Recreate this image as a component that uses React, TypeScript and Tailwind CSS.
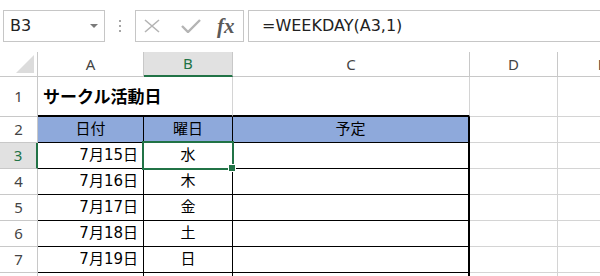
import React from "react";

const GREEN = "#217346";

const days = [
  { date: "7月15日", wd: "水" },
  { date: "7月16日", wd: "木" },
  { date: "7月17日", wd: "金" },
  { date: "7月18日", wd: "土" },
  { date: "7月19日", wd: "日" },
  { date: "", wd: "" },
];

const cellFont = { fontFamily: '"DejaVu Sans", "Noto Sans CJK JP", sans-serif' };
const headFont = { fontFamily: '"Noto Sans", "DejaVu Sans", sans-serif' };

function FormulaBar() {
  return (
    <div className="flex h-[52px] items-start pt-[10px]" style={{ fontFamily: '"DejaVu Sans", sans-serif' }}>
      <div className="ml-[3px] flex h-[32px] w-[102px] items-center justify-between border border-[#c6c6c6] pl-[6px] pr-[6px] text-[16px] text-[#222]">
        <span>B3</span>
        <span className="h-0 w-0 border-x-[4px] border-t-[4px] border-x-transparent border-t-[#7a7a7a]" />
      </div>
      <div className="flex h-[32px] w-[30px] flex-col items-center justify-center gap-[3px]">
        <span className="h-[2px] w-[2px] bg-[#a6a6a6]" />
        <span className="h-[2px] w-[2px] bg-[#a6a6a6]" />
        <span className="h-[2px] w-[2px] bg-[#a6a6a6]" />
      </div>
      <div className="flex h-[32px] w-[109px] items-center border border-[#c6c6c6] pl-[7px]">
        <svg width="16" height="14" viewBox="0 0 16 14" className="ml-[1px]">
          <path d="M1 1 L15 13 M15 1 L1 13" stroke="#b4b4b4" strokeWidth="1.6" fill="none" />
        </svg>
        <svg width="20" height="14" viewBox="0 0 20 14" className="ml-[21px]">
          <path d="M1 7 L7 13 L19 1" stroke="#b4b4b4" strokeWidth="2.4" fill="none" />
        </svg>
        <span
          className="ml-[16px] text-[21px] font-bold italic leading-none text-[#5a5a5a]"
          style={{ fontFamily: '"Liberation Serif", "DejaVu Serif", serif' }}
        >
          fx
        </span>
      </div>
      <div className="ml-[4px] -mr-[10px] flex h-[32px] flex-1 items-center border border-[#c6c6c6] pl-[13px] text-[16px] text-[#222]">
        =WEEKDAY(A3,1)
      </div>
    </div>
  );
}

export default function App() {
  return (
    <div className="relative h-[276px] w-[600px] overflow-hidden bg-white">
      <FormulaBar />
      <div
        className="grid grid-cols-[38px_106px_89px_237px_88px_89px] grid-rows-[25px_40px_26px_26px_26px_26px_26px_26px_26px] text-black"
        style={cellFont}
      >
        {/* column headers */}
        <div className="relative border-b border-r border-[#c8c8c8]">
          <div className="absolute bottom-[3px] right-[3px] h-0 w-0 border-b-0 border-l-[18px] border-r-[18px] border-t-[18px] border-l-transparent border-r-[#dcdcdc] border-t-transparent" />
        </div>
        <div className="flex items-center justify-center border-b border-r border-[#c8c8c8] text-[15px] text-[#444]" style={headFont}>A</div>
        <div className="flex items-center justify-center border-b-2 border-r border-b-[#217346] border-r-[#c8c8c8] bg-[#e1e1e1] text-[15px] text-[#217346]" style={headFont}>B</div>
        <div className="flex items-center justify-center border-b border-r border-[#c8c8c8] text-[15px] text-[#444]" style={headFont}>C</div>
        <div className="flex items-center justify-center border-b border-r border-[#c8c8c8] text-[15px] text-[#444]" style={headFont}>D</div>
        <div className="flex items-center justify-center border-b border-r border-[#c8c8c8] text-[15px] text-[#444]" style={headFont}>E</div>

        {/* row 1 */}
        <div className="flex items-center justify-center border-b border-r border-[#c8c8c8] text-[15px] text-[#444]" style={headFont}>1</div>
        <div className="relative z-10 flex items-center overflow-visible whitespace-nowrap border-b-2 border-black pl-[5px] text-[17px] font-bold" style={{ fontFamily: '"Noto Sans CJK JP", sans-serif' }}>
          サークル活動日
        </div>
        <div className="border-b-2 border-r border-b-black border-r-[#d4d4d4]" />
        <div className="border-b-2 border-r border-b-black border-r-[#d4d4d4]" />
        <div className="border-b border-r border-[#d4d4d4]" />
        <div className="border-b border-r border-[#d4d4d4]" />

        {/* row 2 */}
        <div className="flex items-center justify-center border-b border-r border-[#c8c8c8] text-[15px] text-[#444]" style={headFont}>2</div>
        <div className="flex items-center justify-center border-b border-r border-black bg-[#8ea9db] text-[15px]">日付</div>
        <div className="flex items-center justify-center border-b border-r border-black bg-[#8ea9db] text-[15px]">曜日</div>
        <div className="flex items-center justify-center border-b border-r-2 border-black bg-[#8ea9db] text-[15px]">予定</div>
        <div className="border-b border-r border-[#d4d4d4]" />
        <div className="border-b border-r border-[#d4d4d4]" />

        {/* rows 3-8 */}
        {days.map((d, i) => {
          const row = i + 3;
          const sel = row === 3;
          return (
            <React.Fragment key={row}>
              <div
                className={
                  sel
                    ? "flex items-center justify-center border-b border-r-2 border-b-[#c8c8c8] border-r-[#217346] bg-[#e1e1e1] text-[15px] text-[#217346]"
                    : "flex items-center justify-center border-b border-r border-[#c8c8c8] text-[15px] text-[#444]"
                }
                style={headFont}
              >
                {d.date ? row : ""}
              </div>
              <div className="flex items-center justify-end border-b border-r border-black pr-[5px] text-[15px]">{d.date}</div>
              <div className="flex items-center justify-center border-b border-r border-black text-[15px]">{d.wd}</div>
              <div className="border-b border-r-2 border-black" />
              <div className="border-b border-r border-[#d4d4d4]" />
              <div className="border-b border-r border-[#d4d4d4]" />
            </React.Fragment>
          );
        })}
      </div>

      {/* selection on B3 */}
      <div className="pointer-events-none absolute left-[142px] top-[141px] h-[29px] w-[92px] border-2 border-[#217346]" />
      <div className="pointer-events-none absolute left-[228px] top-[164px] h-[8px] w-[8px] border border-white" style={{ backgroundColor: GREEN }} />
    </div>
  );
}
